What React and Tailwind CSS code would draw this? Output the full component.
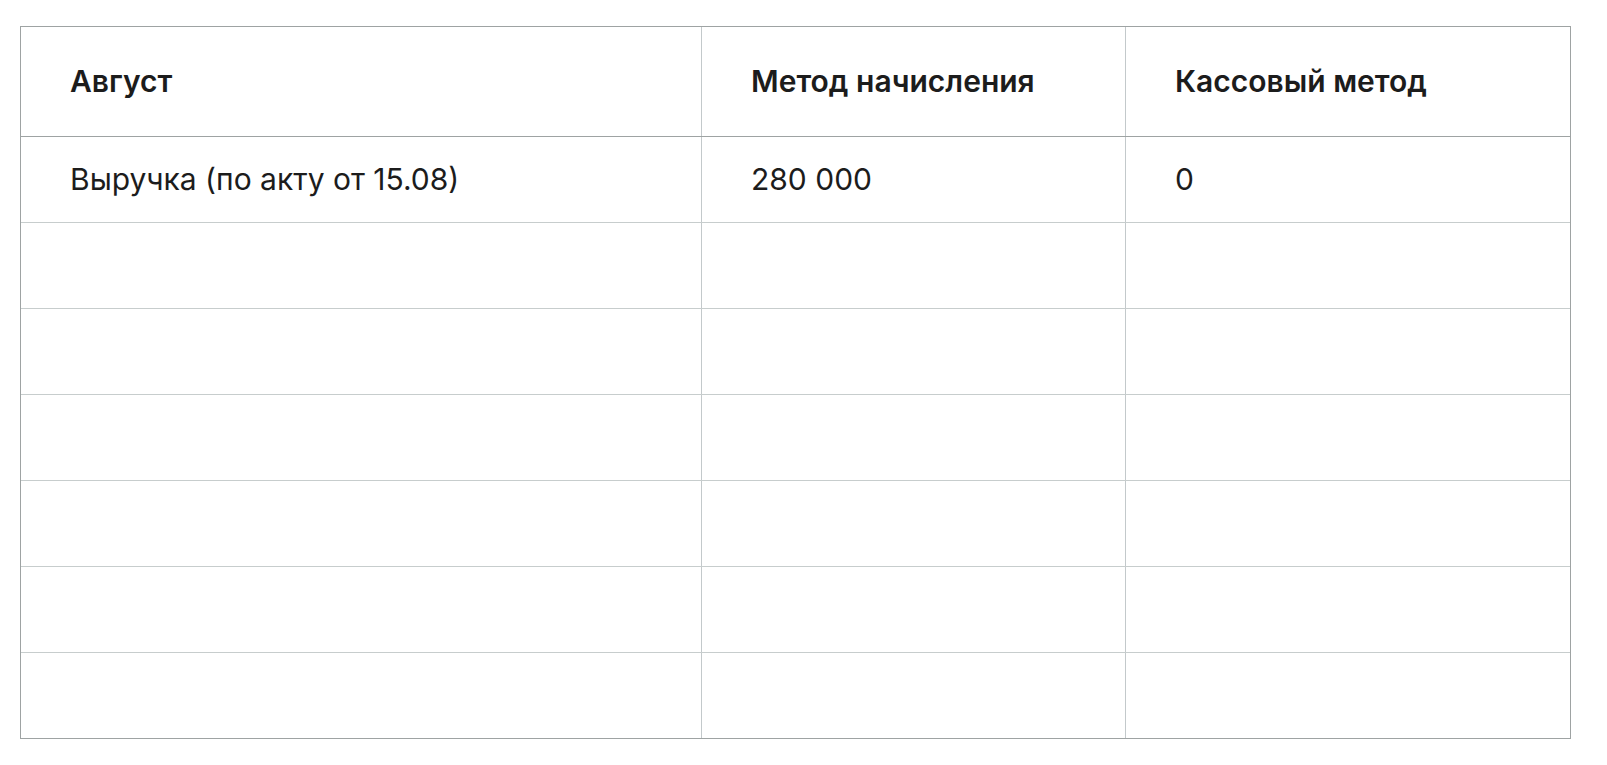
const rows = [
  ["Выручка (по акту от 15.08)", "280 000", "0"],
  ["", "", ""],
  ["", "", ""],
  ["", "", ""],
  ["", "", ""],
  ["", "", ""],
  ["", "", ""],
];

function Row({ cells, head, last }) {
  return (
    <div
      className={`grid grid-cols-[681px_424px_1fr] ${
        head ? "h-[110px] border-b border-[#9ea3a3]" : last ? "h-[85px]" : "h-[86px] border-b border-[#c7cdcd]"
      }`}
    >
      {cells.map((c, i) => (
        <div
          key={i}
          className={`flex items-center pl-[49px] ${i < 2 ? "border-r border-[#c3c9cb]" : ""} ${
            head ? "font-semibold" : "font-normal"
          }`}
        >
          {c}
        </div>
      ))}
    </div>
  );
}

export default function App() {
  return (
    <div
      className="min-h-screen bg-white pt-[26px] pl-[20px] text-[#1c1c1c] text-[30px]"
      style={{ fontFamily: "Inter, 'Noto Sans', sans-serif" }}
    >
      <div className="w-[1551px] border border-[#9ea3a3]">
        <Row cells={["Август", "Метод начисления", "Кассовый метод"]} head />
        {rows.map((r, i) => (
          <Row key={i} cells={r} last={i === rows.length - 1} />
        ))}
      </div>
    </div>
  );
}
